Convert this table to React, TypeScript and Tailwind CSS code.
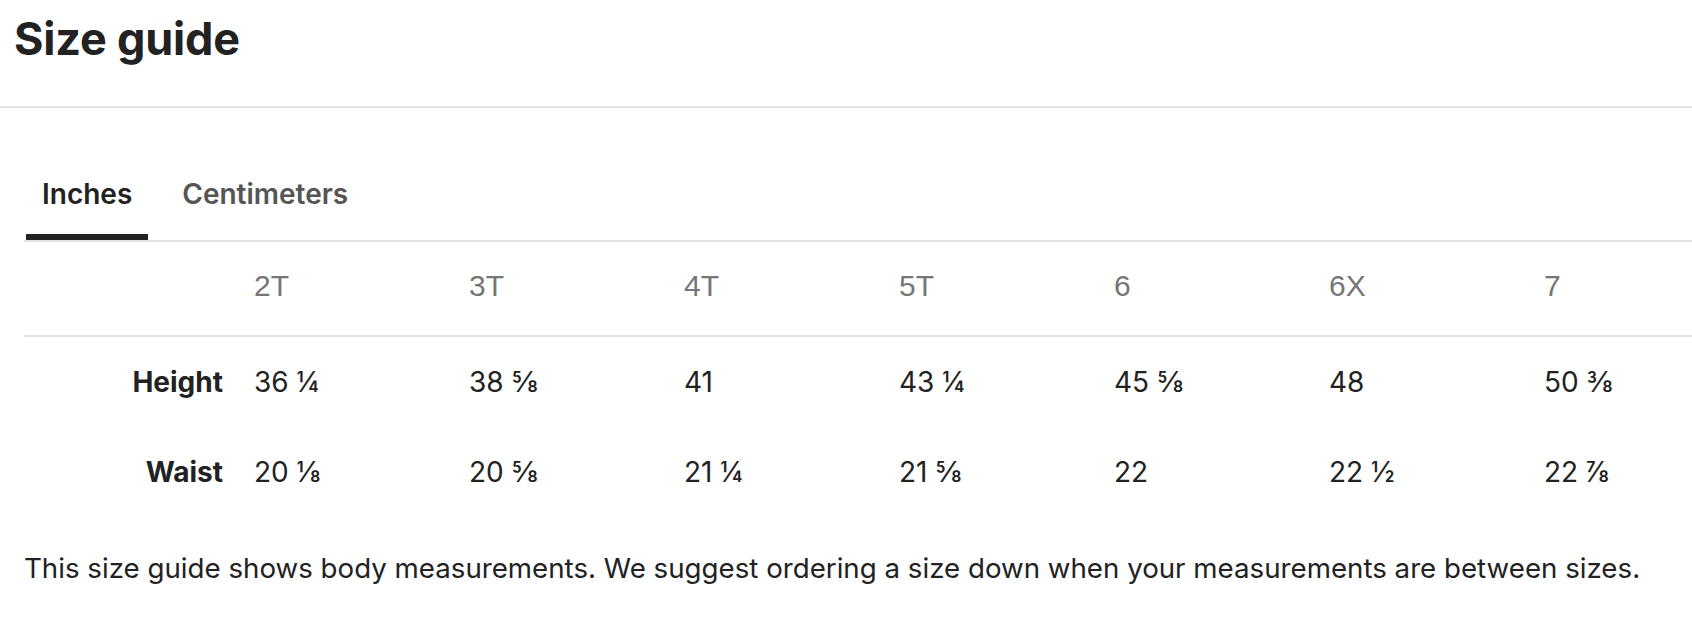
import { useState } from "react";

const sizes = ["2T", "3T", "4T", "5T", "6", "6X", "7"];

const rows: { label: string; values: string[] }[] = [
  { label: "Height", values: ["36 ¼", "38 ⅝", "41", "43 ¼", "45 ⅝", "48", "50 ⅜"] },
  { label: "Waist", values: ["20 ⅛", "20 ⅝", "21 ¼", "21 ⅝", "22", "22 ½", "22 ⅞"] },
];

const gridCols = "grid grid-cols-[214px_repeat(7,215px)]";

export default function App() {
  const [unit, setUnit] = useState<"in" | "cm">("in");

  return (
    <div className="min-h-screen bg-white text-[#222] font-['Inter',sans-serif]">
      {/* Header */}
      <div className="px-[14px] pt-[11px]">
        <h1 className="text-[45px] leading-[56px] font-bold tracking-[-0.2px]">Size guide</h1>
      </div>
      <div className="mt-[39px] h-[2px] bg-[#e3e3e3]" />

      <div className="pl-6">
        {/* Tabs */}
        <div className="mt-[69px] flex gap-[18px] border-b-2 border-[#e3e3e3] pl-[2px]">
          <TabButton active={unit === "in"} onClick={() => setUnit("in")}>
            Inches
          </TabButton>
          <TabButton active={unit === "cm"} onClick={() => setUnit("cm")}>
            Centimeters
          </TabButton>
        </div>

        {/* Table */}
        <div className="overflow-hidden">
          <div className={`${gridCols} w-max min-w-full border-b-2 border-[#e3e3e3] pt-[26px] pb-[31px]`}>
            <div />
            {sizes.map((s) => (
              <div
                key={s}
                className="pl-4 text-[30px] leading-[36px] text-[#767676] font-['Liberation_Sans',Arial,sans-serif]"
              >
                {s}
              </div>
            ))}
          </div>

          {rows.map((row) => (
            <div key={row.label} className={`${gridCols} w-max py-[28px] text-[28px] leading-[34px]`}>
              <div className="pr-[15px] text-right font-bold">{row.label}</div>
              {row.values.map((v, i) => (
                <div key={i} className="pl-4">
                  {v}
                </div>
              ))}
            </div>
          ))}
        </div>

        <p className="mt-[34px] text-[27.7px] leading-[34px] text-[#222]">
          This size guide shows body measurements. We suggest ordering a size down when your measurements are between sizes.
        </p>
      </div>
    </div>
  );
}

function TabButton({
  active,
  onClick,
  children,
}: {
  active: boolean;
  onClick: () => void;
  children: React.ReactNode;
}) {
  return (
    <button
      type="button"
      onClick={onClick}
      className={`px-4 pb-[23px] text-[28px] leading-[34px] font-semibold border-b-[6px] ${
        active ? "border-[#222] text-[#222]" : "border-transparent text-[#555]"
      }`}
    >
      {children}
    </button>
  );
}
